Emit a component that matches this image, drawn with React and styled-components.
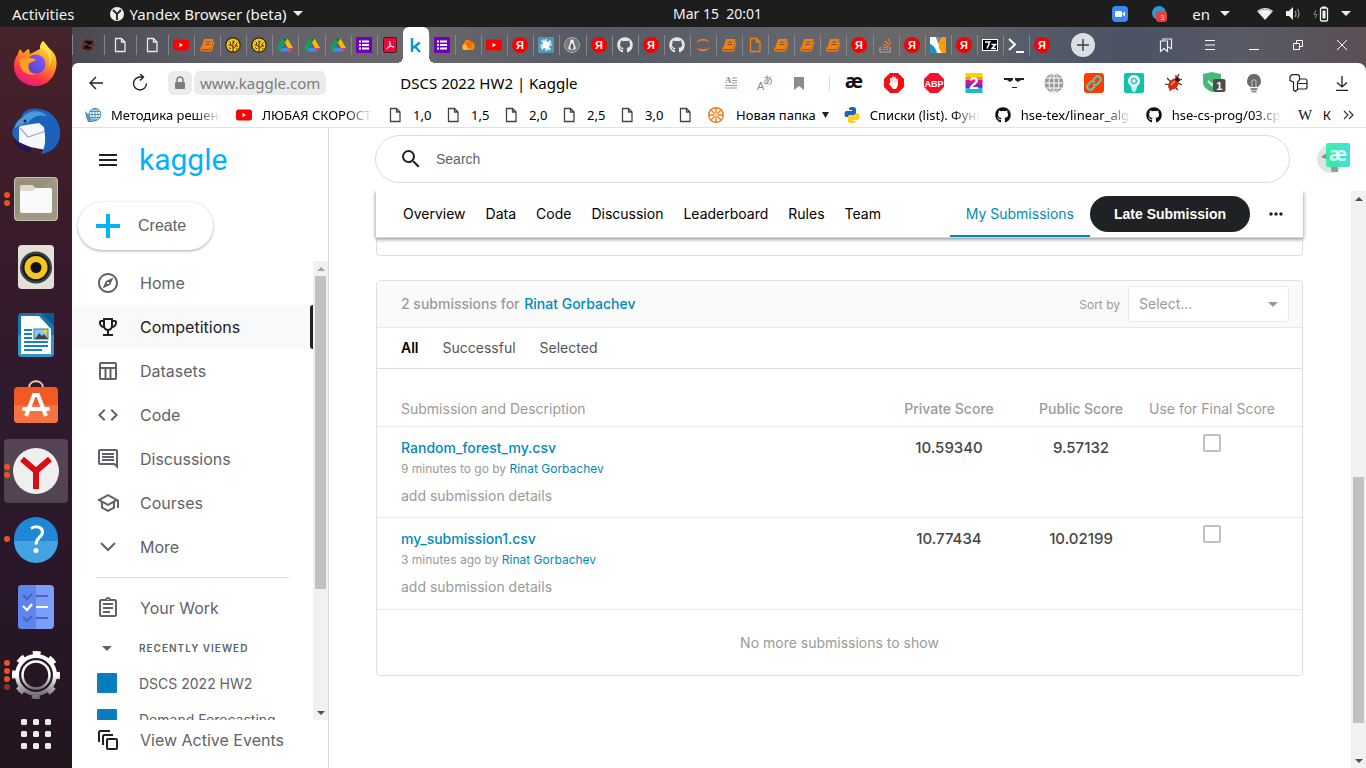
import React from "react";
import styled, { createGlobalStyle, css } from "styled-components";
import {
  MdOutlineExplore, MdOutlineEmojiEvents, MdCode, MdOutlineComment, MdOutlineSchool,
  MdOutlineAssignment, MdArrowDropDown, MdSearch, MdMoreHoriz, MdMenu,
} from "react-icons/md";
import { FaGithub } from "react-icons/fa";

const system = `"Noto Sans", "Open Sans", sans-serif`;
const inter = `Inter, "Open Sans", sans-serif`;
const arial = `"Liberation Sans", Arial, sans-serif`;

const Global = createGlobalStyle`
  *, *::before, *::after { box-sizing: border-box; }
  body { margin: 0; background: #fff; overflow: hidden; font-family: ${inter}; font-size: 14px; color: #000; }
  button { font: inherit; color: inherit; background: none; border: 0; padding: 0; cursor: pointer; }
  a { color: inherit; text-decoration: none; }
  svg { display: block; flex: none; }
`;

/* ---------- desktop shell ---------- */
const Desktop = styled.div`
  height: 100vh;
  display: flex;
  flex-direction: column;
  background: #5a5b63;
`;
const TopBar = styled.header`
  flex: 0 0 27px;
  display: grid;
  grid-template-columns: 1fr auto 1fr;
  align-items: center;
  padding: 0 15px 0 12px;
  background: #1d1d1d;
  color: #f2f2f2;
  font: 15px/20px ${system};
`;
const TopGroup = styled.div`
  display: flex;
  align-items: center;
  gap: ${(p) => p.$gap}px;
  justify-content: ${(p) => (p.$end ? "flex-end" : "flex-start")};
`;
const TopButton = styled.button`
  display: flex;
  align-items: center;
  gap: 6px;
  white-space: pre;
`;
const Clock = styled(TopButton)`
  margin-left: 72px;
  font-size: 14px;
`;
const Tray = styled(TopGroup)`
  margin-right: 15px;
`;
const Body = styled.div`
  flex: 1;
  min-height: 0;
  display: flex;
`;
const Dock = styled.nav`
  flex: 0 0 72px;
  display: flex;
  flex-direction: column;
  align-items: center;
  gap: 4px;
  padding-top: 4px;
  background: linear-gradient(#47232a 0, #3c1c2b 22%, #2f1a2e 50%, #291729 75%, #23161f 100%);
  overflow: hidden;
`;
const DockItem = styled.button`
  position: relative;
  flex: 0 0 ${(p) => p.$height || 64}px;
  width: 64px;
  display: flex;
  align-items: center;
  justify-content: center;
  border-radius: 4px;
  background: ${(p) => (p.$active ? "rgba(255,255,255,.19)" : "none")};
`;
const DockDots = styled.span`
  position: absolute;
  left: 0;
  top: 0;
  bottom: 0;
  display: flex;
  flex-direction: column;
  justify-content: center;
  gap: 2px;
  i { width: 6px; height: 6px; border-radius: 3px; background: #e95420; }
  i:nth-child(4) { opacity: .5; }
`;

/* ---------- browser window ---------- */
const Browser = styled.div`
  flex: 1;
  min-width: 0;
  display: flex;
  flex-direction: column;
  background: linear-gradient(90deg, #484951 0, #5d5d66 10%, #6b686c 26%, #565964 40%, #63656d 55%, #686868 66%, #555b69 74%, #4a5264 82%, #585a66 90%, #5c4f55 100%);
`;
const TabStrip = styled.div`
  flex: 0 0 36px;
  display: flex;
`;
const Tabs = styled.div`
  flex: 0 1 983px;
  min-width: 0;
  display: flex;
`;
const Tab = styled.button`
  position: relative;
  flex: ${(p) => (p.$pinned ? "0 0 32px" : "1 1 0")};
  min-width: 0;
  display: flex;
  align-items: center;
  justify-content: center;
  ${(p) => p.$active ? css`
    background: #fff;
    border-radius: 6px 6px 0 0;
    &::before, &::after {
      content: "";
      position: absolute;
      bottom: 0;
      width: 6px;
      height: 6px;
    }
    &::before { right: 100%; background: radial-gradient(circle at 0 0, transparent 6px, #fff 6px); }
    &::after { left: 100%; background: radial-gradient(circle at 100% 0, transparent 6px, #fff 6px); }
  ` : css`
    background: linear-gradient(#85868b, #85868b) 0 8px / 1px 20px no-repeat;
  `}
`;
const NewTab = styled.button`
  align-self: center;
  width: 24px;
  height: 24px;
  margin-left: 16px;
  display: flex;
  align-items: center;
  justify-content: center;
  border-radius: 12px;
  background: #dcdee1;
`;
const WindowControls = styled.div`
  margin-left: auto;
  padding-right: 2px;
  display: flex;
`;
const ControlButton = styled.button`
  width: 44px;
  display: flex;
  align-items: center;
  justify-content: center;
`;
const Toolbar = styled.div`
  flex: 0 0 40px;
  display: flex;
  align-items: stretch;
  padding: 0 2px;
  background: #fff;
  border-radius: 6px 8px 0 0;
`;
const Address = styled.div`
  flex: 1;
  min-width: 0;
  display: flex;
  align-items: center;
  gap: 2px;
  padding-left: 6px;
  font: 15px/24px ${system};
  white-space: nowrap;
`;
const Pill = styled.button`
  height: 24px;
  padding: 0 ${(p) => p.$pad}px;
  border-radius: 6px;
  background: #ebebeb;
  color: #7c7c7c;
  display: flex;
  align-items: center;
`;
const PageTitle = styled.span`
  margin-left: 72px;
`;
const ToolSlot = styled.button`
  width: ${(p) => p.$width}px;
  display: flex;
  align-items: center;
  justify-content: center;
`;
const ToolDivider = styled.span`
  align-self: center;
  width: 1px;
  height: 16px;
  margin: 0 4px 0 14px;
  background: #ddd;
`;
const ToolGroup = styled.div`
  display: flex;
  margin-left: 2px;
`;
const Bookmarks = styled.nav`
  flex: 0 0 25px;
  display: flex;
  align-items: center;
  padding: 0 10px 0 13px;
  background: #fff;
  border-bottom: 1px solid #e2e2e2;
  font: 13px/18px ${system};
`;
const BookmarkList = styled.div`
  flex: 1;
  min-width: 0;
  display: flex;
  align-items: center;
  gap: 15px;
  overflow: hidden;
`;
const Bookmark = styled.a`
  flex: none;
  display: flex;
  align-items: center;
  gap: ${(p) => (p.$folder ? 6 : 10)}px;
`;
const BookmarkLabel = styled.span`
  width: ${(p) => (p.$width ? p.$width + "px" : "auto")};
  padding-left: ${(p) => (p.$folder ? 6 : 0)}px;
  white-space: nowrap;
  ${(p) => p.$fade && css`
    overflow: hidden;
    mask-image: linear-gradient(90deg, #000 75%, transparent);
  `}
`;

/* ---------- page ---------- */
const Page = styled.div`
  flex: 1;
  min-height: 0;
  display: flex;
  background: #fff;
`;
const Sidebar = styled.aside`
  flex: 0 0 257px;
  display: flex;
  flex-direction: column;
  border-right: 1px solid #dadce0;
`;
const SideHead = styled.div`
  flex: none;
  height: 63px;
  display: flex;
  align-items: center;
  gap: 19px;
  padding-left: 24px;
`;
const Logo = styled.a`
  color: #00b3ff;
  font: 30px/40px Roboto, sans-serif;
`;
const CreateButton = styled.button`
  flex: none;
  align-self: flex-start;
  height: 48px;
  margin: 11px 0 11px 6px;
  padding: 0 27px 0 18px;
  display: flex;
  align-items: center;
  gap: 18px;
  border-radius: 24px;
  box-shadow: 0 1px 3px rgba(0,0,0,.35);
  color: #5f6368;
  font: 16px/20px ${arial};
`;
const SideScroll = styled.div`
  flex: 1;
  min-height: 0;
  display: flex;
`;
const SideList = styled.nav`
  flex: 1;
  overflow: hidden;
`;
const SideLink = styled.a`
  position: relative;
  height: 44px;
  display: flex;
  align-items: center;
  gap: 20px;
  padding-left: 24px;
  font-size: 16px;
  color: ${(p) => (p.$active ? "#202124" : "#5f6368")};
  background: ${(p) => (p.$active ? "#f8f9fb" : "none")};
  ${(p) => p.$active && css`
    &::after {
      content: "";
      position: absolute;
      right: 0;
      top: 0;
      bottom: 0;
      width: 3px;
      border-radius: 3px 0 0 3px;
      background: #202124;
    }
  `}
`;
const SideRule = styled.hr`
  height: 1px;
  margin: 8px 24px;
  border: 0;
  background: #dadce0;
`;
const RecentHead = styled.button`
  height: 36px;
  width: 100%;
  display: flex;
  align-items: center;
  gap: 20px;
  padding-left: 23px;
  color: #5f6368;
  font-size: 10px;
  font-weight: 600;
  letter-spacing: 1px;
`;
const RecentLink = styled.a`
  height: 36px;
  display: flex;
  align-items: center;
  gap: 22px;
  padding: 0 0 2px 25px;
  color: #5f6368;
`;
const EventsLink = styled(SideLink)`
  height: 48px;
  flex: none;
  padding-bottom: 8px;
`;
const Track = styled.div`
  flex: 0 0 15px;
  display: flex;
  flex-direction: column;
  align-items: center;
  background: #f1f1f1;
`;
const TrackArrow = styled.span`
  flex: 0 0 15px;
  display: flex;
  align-items: center;
`;
const TrackPart = styled.span`
  flex: ${(p) => p.$share} 0 0;
  width: 11px;
  background: ${(p) => (p.$thumb ? "#c1c1c1" : "none")};
`;

const Main = styled.main`
  flex: 1;
  min-width: 0;
  display: flex;
  flex-direction: column;
`;
const SearchRow = styled.div`
  flex: 0 0 63px;
  display: flex;
  align-items: center;
  gap: 27px;
  padding: 0 21px 2px 46px;
`;
const SearchBox = styled.label`
  flex: 1;
  height: 48px;
  display: flex;
  align-items: center;
  gap: 13px;
  padding: 0 23px;
  border: 1px solid #dadce0;
  border-radius: 24px;
  color: #202124;
  input {
    flex: 1;
    border: 0;
    outline: 0;
    padding: 0;
    font: 14px/20px ${arial};
  }
  input::placeholder { color: #5f6368; opacity: 1; }
`;
const Avatar = styled.button`
  position: relative;
  width: 28px;
  height: 28px;
  border-radius: 14px;
  background: #e2e2e2;
`;
const AvatarBadge = styled.span`
  position: absolute;
  left: 9px;
  top: -2px;
  width: 24px;
  height: 24px;
  border-radius: 2px;
  background: linear-gradient(90deg, rgba(52,240,160,.92), rgba(50,220,212,.92));
  color: #d9fff4;
  font: 700 20px/22px ${system};
  text-align: center;
`;
const ContentScroll = styled.div`
  flex: 1;
  min-height: 0;
  display: flex;
`;
const Content = styled.div`
  flex: 1;
  min-width: 0;
  overflow: hidden;
  padding: 0 48px 0 47px;
`;
const CompNav = styled.nav`
  position: relative;
  z-index: 1;
  height: 47px;
  display: flex;
  align-items: center;
  padding: 0 17px 0 27px;
  background: #fff;
  border-bottom: 1px solid #d5d7da;
  box-shadow: 0 1px 4px rgba(0,0,0,.5);
`;
const CompLinks = styled.div`
  flex: 1;
  display: flex;
  gap: 20px;
  padding-bottom: 2px;
`;
const MyLink = styled.a`
  align-self: stretch;
  padding: 0 16px;
  display: flex;
  align-items: center;
  color: #008abc;
  border-bottom: 2px solid #008abc;
`;
const LateButton = styled.button`
  height: 36px;
  padding: 0 24px;
  border-radius: 18px;
  background: #202124;
  color: #fff;
  font: 700 14px/20px ${arial};
`;
const MoreButton = styled.button`
  margin-left: 16px;
`;
const PrevCard = styled.section`
  height: 18px;
  border: 1px solid #dedfe0;
  border-top: 0;
  border-radius: 0 0 4px 4px;
`;
const Card = styled.section`
  margin-top: 24px;
  border: 1px solid #dedfe0;
  border-radius: 4px;
  overflow: hidden;
`;
const CardHead = styled.header`
  height: 47px;
  display: flex;
  align-items: center;
  padding: 0 13px 0 24px;
  background: #fafafa;
  border-bottom: 1px solid #e9e9e9;
`;
const CardTitle = styled.h2`
  flex: 1;
  margin: 0;
  padding-bottom: 2px;
  font-size: 14px;
  font-weight: 500;
  color: #9a9a9a;
  a { color: #008abc; margin-left: 1px; }
`;
const SortLabel = styled.label`
  margin-right: 8px;
  font-size: 12px;
  color: #9a9a9a;
`;
const SelectWrap = styled.span`
  display: grid;
  align-items: center;
  width: 161px;
  svg, select { grid-area: 1 / 1; }
  svg { justify-self: end; margin-right: 4px; pointer-events: none; z-index: 1; }
  select {
    appearance: none;
    width: 100%;
    height: 36px;
    padding: 0 10px;
    border: 1px solid #e8e8e8;
    border-radius: 4px;
    background: #fff;
    color: #9a9a9a;
    font: 14px/20px ${inter};
  }
`;
const Filters = styled.div`
  height: 41px;
  display: flex;
  align-items: center;
  gap: 24px;
  padding: 0 24px 2px;
  border-bottom: 1px solid #dedfe0;
`;
const Filter = styled.button`
  color: ${(p) => (p.$active ? "#000" : "#555")};
  font-weight: ${(p) => (p.$active ? 600 : 400)};
`;
const Table = styled.table`
  width: 100%;
  table-layout: fixed;
  border-collapse: collapse;
`;
const Th = styled.th`
  width: ${(p) => (p.$width ? p.$width + "px" : "auto")};
  height: 57px;
  padding: ${(p) => (p.$first ? "24px 0 0 24px" : p.$last ? "24px 25px 0 0" : "24px 0 0")};
  text-align: ${(p) => (p.$first ? "left" : "center")};
  font-weight: ${(p) => (p.$strong ? 500 : 400)};
  line-height: 20px;
  color: #9a9a9a;
  white-space: nowrap;
`;
const Row = styled.tr`
  height: 91px;
  border-top: 1px solid #e9e9e9;
  &:last-child { height: 92px; border-bottom: 1px solid #e9e9e9; }
`;
const FileCell = styled.td`
  padding: 11px 0 0 24px;
  vertical-align: top;
`;
const FileLink = styled.a`
  display: block;
  line-height: 20px;
  font-weight: 500;
  color: #008abc;
`;
const Meta = styled.div`
  margin-top: 1px;
  font-size: 12px;
  line-height: 20px;
  color: #9a9a9a;
  a { color: #008abc; }
`;
const Details = styled.button`
  display: block;
  margin-top: 7px;
  line-height: 20px;
  color: #9a9a9a;
`;
const Score = styled.td`
  padding: 11px 0 0;
  vertical-align: top;
  text-align: center;
  line-height: 20px;
  font-weight: 500;
  font-size: 15px;
  color: #454545;
`;
const PickCell = styled.td`
  padding: 7px 25px 0 0;
  vertical-align: top;
  text-align: center;
  input {
    appearance: none;
    display: block;
    width: 18px;
    height: 18px;
    margin: 0 auto;
    border: 2px solid #bdc1c6;
    border-radius: 2px;
    background: #fff;
  }
`;
const NoMore = styled.p`
  margin: 0;
  height: 65px;
  display: flex;
  align-items: center;
  justify-content: center;
  color: #9a9a9a;
`;

/* ---------- small drawings ---------- */
const Svg = ({ s = 16, vb = "0 0 16 16", children, ...rest }) => (
  <svg width={s} height={s} viewBox={vb} fill="none" aria-hidden="true" {...rest}>{children}</svg>
);
const Caret = ({ up, color = "#505050", w = 8, h = 4 }) => (
  <svg width={w} height={h} viewBox="0 0 8 4" preserveAspectRatio="none" aria-hidden="true">
    <path d={up ? "M0 4L4 0l4 4z" : "M0 0l4 4 4-4z"} fill={color} />
  </svg>
);
const Doc = ({ color = "#e8e8e8" }) => (
  <Svg><path d="M3.500 1.500h6L13 5v9.500H3.500zM9.500 1.500V5H13" stroke={color} strokeWidth="1.300" /></Svg>
);
const Yt = () => (
  <Svg><rect y="2.500" width="16" height="11" rx="2.500" fill="#f00" /><path d="M6.500 5.800v4.400L10 8z" fill="#fff" /></Svg>
);
const Book = () => (
  <Svg>
    <path d="M5.200 2h8.300q1 0 .8 1l-2.300 8q-.3 1-1.300 1H3.500q-1.500 0-1.200-1.200z" fill="#f77f0e" />
    <path d="M2 10.500Q1.200 13.800 3.500 13.800h7.800q1 0 1.300-1L15 5" stroke="#f77f0e" strokeWidth="1.300" />
    <path d="M6.800 5h5M6.100 7.500h5" stroke="#6a5748" strokeWidth="1" />
  </Svg>
);
const Brain = () => (
  <Svg>
    <circle cx="8" cy="8" r="7.200" fill="#f9c61e" stroke="#2b2412" strokeWidth="1.200" />
    <path d="M8 15V3.500M8 11.500l3-2.500V7M8 9.500L5.500 8V5.500M8 6l1.800-1.800M5.500 8H3.500M11 9h2M6 12l-2-1.500M11 12.500L12.500 11M5.500 5.500L4.500 4.500M11 7l1.500-1.500" stroke="#2b2412" strokeWidth=".9" />
  </Svg>
);
const Drive = () => (
  <Svg>
    <path d="M5.500 1.500L0 11l2.500 3.500L8.200 5z" fill="#11a15e" />
    <path d="M5.500 1.500h5L8.200 5z" fill="#0b8043" />
    <path d="M10.500 1.500L16 11h-5L8 5.500z" fill="#ffba00" />
    <path d="M5 11h11l-2.500 3.500h-11z" fill="#4688f4" />
    <path d="M16 11l-2.500 3.500L11 11z" fill="#e94335" />
  </Svg>
);
const Forms = () => (
  <Svg><rect width="16" height="16" rx="1" fill="#7200b8" /><path d="M3 4.500h2M6 4.500h7M3 8h2M6 8h7M3 11.500h2M6 11.500h7" stroke="#fff" strokeWidth="2" /></Svg>
);
const Pdf = () => (
  <Svg><rect x="1.500" y=".5" width="13" height="15" rx="2" fill="#ea0b3e" stroke="#52101f" /><path d="M7.500 4c1.500 3-.5 6-3 8 2-2.500 5-3.200 7.500-1.800C9.500 10 7.500 7 7.500 4z" stroke="#fff" strokeWidth=".8" /></Svg>
);
const Cloud = () => (
  <Svg><path d="M4 13a3.500 3.500 0 010-6 4 4 0 017.500-2 4.200 4.200 0 01.5 8z" fill="#ff8a00" /><circle cx="9" cy="7.500" r="3.500" fill="#ff6d00" /><path d="M4 13a3.500 3.500 0 010-6c3 0 3 4 5 6z" fill="#ffb640" /></Svg>
);
const Ya = () => (
  <Svg><circle cx="8" cy="8" r="8" fill="#f60000" /><text x="8" y="12" textAnchor="middle" fontFamily={arial} fontWeight="700" fontSize="11" fill="#fff">Я</text></Svg>
);
const Splat = () => (
  <Svg><rect width="16" height="16" fill="#5096b8" /><circle cx="8" cy="8" r="3.500" fill="#fff" /><path d="M8 2v12M2 8h12M3.500 3.500l9 9M12.500 3.500l-9 9M5.500 2.500l5 11M2.500 10.500l11-5" stroke="#fff" strokeWidth="1.200" /></Svg>
);
const Penguin = () => (
  <Svg><circle cx="8" cy="8" r="7.500" fill="#777" stroke="#a9a9a9" /><path d="M8 2.500c2 0 2 2 2 4 1 2 2 3 1.500 6h-7C4 9.500 5 8.500 6 6.500c0-2 0-4 2-4z" fill="#ececec" /><path d="M8 6c1.500 2 2 4 1 6H7c-1-2-.5-4 1-6z" fill="#555" /></Svg>
);
const Jupyter = () => (
  <Svg><path d="M1.500 5.500c2.500-5 10.500-5 13 0-4-2.200-9-2.200-13 0zM1.500 10.500c2.500 5 10.500 5 13 0-4 2.200-9 2.200-13 0z" fill="#f37626" /></Svg>
);
const Wave = () => (
  <Svg><path d="M0 0h16v16H0z" fill="#fff" /><path d="M0 7c3 1 6 4 7 9H0z" fill="#1694c9" /><path d="M6 0c1 5 3 7 4 9 0-4 1-7 3-9z" fill="#7d8793" /><path d="M16 0v16h-4C7 11 8 3 13 0z" fill="#ff9b0a" /></Svg>
);
const SevenZip = () => (
  <Svg><rect y="2" width="16" height="12" fill="#fff" /><rect x="1" y="3" width="14" height="10" fill="#000" /><path d="M3 5h4v2L5 11.500M8 4v1M9.500 7.500h4l-3.500 4h4" stroke="#fff" strokeWidth="1.500" /></Svg>
);
const Prompt = () => (
  <Svg><path d="M1 2l6 5.500L1 13M8 15h8" stroke="#fff" strokeWidth="2" /></Svg>
);
const Zed = () => (
  <Svg><circle cx="8" cy="8" r="6.300" fill="#3a3438" stroke="#9d2c2e" /><path d="M5 5.200h6l-6 5.600h6" stroke="#0d0d0d" strokeWidth="2" /><path d="M2 5.500l12 5" stroke="#c33" strokeWidth=".7" /></Svg>
);
const Kay = () => (
  <Svg s={18} vb="0 0 18 18"><path d="M5 2v14M12.800 6.500L6 12M8 10.500l5 5.500" stroke="#0f96cc" strokeWidth="2.400" /></Svg>
);
const GH = ({ color = "#e6e6e6" }) => <FaGithub size={16} color={color} />;
const SO = () => <Svg><path d="M2 10v5h10v-5" stroke="#aaa" strokeWidth="1.200" /><path d="M4 12.500h6M4.200 10l5.900 1M5 7l5.500 2.700M7 4l4.500 4M10 1.500l3 5" stroke="#f48024" strokeWidth="1.200" /></Svg>;

const tabs = [
  Zed, Doc, Doc, Yt, Book, Brain, Brain, Drive, Drive, Drive, Forms, Pdf, Kay, Forms, Cloud, Yt, Ya,
  Splat, Penguin, Ya, GH, Ya, GH, Jupyter, Book, () => <Doc color="#f77f0e" />, Book, Book, Book, Ya, SO,
  Ya, Wave, Ya, SevenZip, Prompt, Ya,
];

const Globe = ({ s = 20, color = "#9a9a9a" }) => (
  <Svg s={s} vb="0 0 20 20"><circle cx="10" cy="10" r="9.500" fill={color} /><path d="M10 1v18M1 10h18M2.500 5h15M2.500 15h15" stroke="#fff" /><ellipse cx="10" cy="10" rx="5" ry="9.200" stroke="#fff" /></Svg>
);
const extensions = [
  ["Reader", () => <Svg s={20} vb="0 0 20 20"><text x="10" y="15" textAnchor="middle" fontFamily={system} fontWeight="700" fontSize="20" fill="#111">æ</text></Svg>],
  ["AdBlock", () => <Svg s={20} vb="0 0 20 20"><path d="M6 0h8l6 6v8l-6 6H6l-6-6V6z" fill="#f40d12" /><path d="M7 11V5.500M9 10V4M11 10V4.500M13 11V6" stroke="#fff" strokeWidth="1.700" strokeLinecap="round" /><path d="M6.200 9.500h7.700v3L12 16H9l-4-5z" fill="#fff" /></Svg>],
  ["Adblock Plus", () => <Svg s={20} vb="0 0 20 20"><path d="M6 0h8l6 6v8l-6 6H6l-6-6V6z" fill="#f7102c" /><text x="10" y="13.500" textAnchor="middle" fontFamily={arial} fontWeight="700" fontSize="9" fill="#fff">ABP</text></Svg>],
  ["Speed Dial 2", () => <Svg s={20} vb="0 0 20 20"><path d="M1.500 0h17v4h-17z" fill="#ffd000" /><path d="M1.500 4h17v3h-17z" fill="#f7941d" /><path d="M1.500 7h17v4h-17z" fill="#e5127d" /><path d="M1.500 11h17v4h-17z" fill="#7a28c8" /><path d="M1.500 15h17v5h-17z" fill="#20b9c7" /><text x="10" y="16" textAnchor="middle" fontFamily={arial} fontWeight="700" fontSize="17" fill="#fff">2</text></Svg>],
  ["Mask", () => <Svg s={20} vb="0 0 20 20"><path d="M0 5h9v2l-3 2-3-2H0zM20 5h-9v2l3 2 3-2h3zM8 14h5v1H8z" fill="#222" /></Svg>],
  ["Globe", Globe],
  ["Link", () => <Svg s={20} vb="0 0 20 20"><rect width="20" height="20" rx="3" fill="#ff3d00" /><path d="M9 7l2.500-2.800a3 3 0 014.400 4.200L13.500 11a3 3 0 01-4.300-.2M11 13l-2.500 2.800A3 3 0 014.100 11.600L6.500 9a3 3 0 014.300.2" stroke="#3ad6c6" strokeWidth="2" /></Svg>],
  ["Idea", () => <Svg s={20} vb="0 0 20 20"><rect width="20" height="20" rx="2" fill="#0cc5ab" /><circle cx="10" cy="8" r="6" fill="#fff" /><path d="M7 14h6M7.500 16h5M8.500 18h3" stroke="#fff" strokeWidth="1.500" /><circle cx="10" cy="8" r="2.500" stroke="#0cc5ab" strokeWidth="2" strokeDasharray="1.500 .5" /></Svg>],
  ["Bug", () => <Svg s={20} vb="0 0 20 20"><path d="M3 5l4 4M1 11l5 1M6 18l1-4M12 2l0 4M18 6l-4 2M18 12l-4-2M14 17l-3-3M15 1l-2 4" stroke="#333" strokeWidth="1.200" /><ellipse cx="9.500" cy="11" rx="4.500" ry="6.500" transform="rotate(40 9.500 11)" fill="#d92d13" /><path d="M7 12l4-4" stroke="#ff9a70" strokeWidth="1.500" /><circle cx="13.500" cy="6.500" r="2.300" fill="#3a1712" /></Svg>],
  ["Protect", () => <Svg s={24} vb="0 0 24 24"><path d="M1 3l9-2 9 2v8c0 5-4 8-9 10-5-2-9-5-9-10z" fill="#45b87a" /><path d="M6 10l4 4 4-5" stroke="#d7f3e3" strokeWidth="2" /><rect x="11" y="8" width="12.500" height="13" rx="2" fill="#4c4c4c" /><text x="17.300" y="18.500" textAnchor="middle" fontFamily={arial} fontWeight="700" fontSize="11" fill="#fff">1</text></Svg>],
  ["Lamp", () => <Svg s={20} vb="0 0 20 20"><path d="M10 1a7 7 0 00-3.500 13h7A7 7 0 0010 1z" fill="#6b6b6b" /><path d="M8 14V8q2-2.500 4 0v6" stroke="#bbb" strokeWidth="1.200" /><path d="M6.500 16h7M7.500 18.500h5" stroke="#8a8a8a" strokeWidth="2" /></Svg>],
];

const bookmarks = [
  [<Svg><circle cx="10" cy="7.500" r="6" fill="#fff" stroke="#2f7fb5" /><path d="M10 1.500v12M4 7.500h12M5 4.500h10M5 10.500h10" stroke="#2f7fb5" strokeWidth=".8" /><ellipse cx="10" cy="7.500" rx="3" ry="6" stroke="#2f7fb5" strokeWidth=".8" /><path d="M0 4l4 4 2 5 4 2H3L1 10z" fill="#5893b8" /></Svg>, "Методика решения", 110],
  [<Yt />, "ЛЮБАЯ СКОРОСТЬ", 110],
  [<Doc color="#444" />, "1,0", 17],
  [<Doc color="#444" />, "1,5", 17],
  [<Doc color="#444" />, "2,0", 17],
  [<Doc color="#444" />, "2,5", 17],
  [<Doc color="#444" />, "3,0", 17],
  [<Doc color="#444" />, null],
  [<Svg><circle cx="8" cy="8" r="7.300" stroke="#f07c12" strokeWidth="1.400" /><path d="M8 1v14M1 8h14M3 3l10 10M13 3L3 13" stroke="#f07c12" strokeWidth="1.400" /><circle cx="8" cy="8" r="2" fill="#fbd2a4" /></Svg>, "Новая папка", 0, true],
  [<Svg><path d="M8 0c4 0 4 1 4 3v3c0 1-1 2-2 2H6c-1 0-2 1-2 2H2C0 10 0 5 2 4h6V3H5C5 1 5 0 8 0z" fill="#2163b8" /><path d="M8 16c-4 0-4-1-4-3v-3c0-1 1-2 2-2h4c1 0 2-1 2-2h2c2 1 2 6 0 7H9v1h3c0 1-1 2-4 2z" fill="#ffd21f" /></Svg>, "Списки (list). Функции", 110],
  [<GH color="#111" />, "hse-tex/linear_algebra", 110],
  [<GH color="#111" />, "hse-cs-prog/03.cpp", 110],
  [<Svg><text x="8" y="13" textAnchor="middle" fontFamily="Liberation Serif, serif" fontSize="15" fill="#111">W</text></Svg>, "К", 5],
];

const SelectAll = () => (
  <Svg s={24} vb="0 0 24 24"><path d="M3 14V4.500Q3 3 4.500 3H14M7 17V8.500Q7 7 8.500 7H17" stroke="#202124" strokeWidth="2" /><rect x="11" y="11" width="10" height="10" rx="1" stroke="#202124" strokeWidth="2" /></Svg>
);
const TableIcon = () => (
  <Svg s={24} vb="0 0 24 24"><rect x="4" y="4" width="16" height="16" rx="1" stroke="currentColor" strokeWidth="2" /><path d="M4 9h16M9.500 9v11M14.500 9v11" stroke="currentColor" strokeWidth="2" /></Svg>
);
const Chevron = () => (
  <Svg s={24} vb="0 0 24 24"><path d="M5 8l7 7 7-7" stroke="currentColor" strokeWidth="2" /></Svg>
);
const navItems = [
  ["Home", () => <MdOutlineExplore size={24} />],
  ["Competitions", () => <MdOutlineEmojiEvents size={24} />],
  ["Datasets", TableIcon],
  ["Code", () => <MdCode size={24} />],
  ["Discussions", () => <MdOutlineComment size={24} />],
  ["Courses", () => <MdOutlineSchool size={24} />],
  ["More", Chevron],
];
const RecentTile = () => (
  <Svg s={20} vb="0 0 20 20"><rect width="20" height="20" rx="1" fill="#0a80c2" /><path d="M4 4h3v3H4zM9 4h3v3H9zM14 4h3v3h-3zM4 9h3v3H4zM9 9h3v3H9zM14 9h3v3h-3zM4 14h3v3H4zM9 14h3v3H9zM14 14h3v3h-3z" stroke="#0774b4" /></Svg>
);

const dock = [
  ["Firefox", 0, () => (
    <Svg s={48} vb="0 0 48 48">
      <defs>
        <linearGradient id="ff" x1=".8" y1="0" x2=".3" y2="1"><stop offset="0" stopColor="#fff04a" /><stop offset=".4" stopColor="#ff9a1e" /><stop offset=".75" stopColor="#ff3647" /><stop offset="1" stopColor="#e31587" /></linearGradient>
        <linearGradient id="ffp" x1="1" y1="0" x2="0" y2="1"><stop offset="0" stopColor="#9059ff" /><stop offset="1" stopColor="#4a3fd0" /></linearGradient>
      </defs>
      <path d="M28 10c0-3 1-6 3-8 2 5 9 8 12 14 5 11-2 31-19 31C11 47 2 38 2 27c0-6 2-9 4-12 0-2 1-4 3-5 0 2 1 3 3 4 1-2 4-4 5-4l1 5 10-5z" fill="url(#ff)" />
      <circle cx="24" cy="25" r="9.500" fill="url(#ffp)" />
      <path d="M8 20c5-3 11-1 16 0 0 3-6 3-7 5-2 6 2 10 7 10-10 3-18-5-16-15z" fill="#ff9b28" />
      <path d="M28 9c8 2 12 12 8 20 7-9 2-21-5-27-2 2-3 4-3 7z" fill="#ffe24a" />
    </Svg>)],
  ["Thunderbird", 0, () => (
    <Svg s={48} vb="0 0 48 48">
      <path d="M20 2C35 0 48 11 48 26c0 12-8 19-19 21l4-6-12-2C10 38 2 34 0 26c1-6 5-12 9-15 2-6 6-9 11-9z" fill="#1f66c4" />
      <path d="M7 19l20-3 10 8-3 19-16-3-11-5z" fill="#f4f7fb" /><path d="M8 21l8 9 18-6" stroke="#a9a9a9" strokeWidth="1.200" />
      <path d="M20 2C35 0 48 11 48 26c0 12-8 19-19 21 6-8 4-19 3-27-4-6-12-8-20-3-3 1-6 4-10 8C3 18 6 13 10 11c1-5 5-9 10-9z" fill="#1c62bd" />
      <path d="M10 11c6-8 18-9 25-2-9-2-15 1-19 7-5 0-8 2-13 5 0-4 3-8 7-10z" fill="#4a9ad8" /><circle cx="13" cy="14" r="1.500" fill="#222" />
      <path d="M1 30c4 8 10 9 18 10l-1 5C9 45 3 39 1 30z" fill="#26135c" />
    </Svg>)],
  ["Files", 2, () => (
    <Svg s={48} vb="0 0 48 48"><rect x="2" y="2" width="44" height="44" rx="4" fill="#9f9983" /><path d="M2 6q0-4 4-4h36L2 42z" fill="#8a846e" opacity=".4" /><rect x="2.500" y="2.500" width="43" height="43" rx="4" stroke="#c7c3b4" /><path d="M8 12q0-2 2-2h10l4 3h6v8H8z" fill="#ddd9ce" /><path d="M8 17q0-1 2-1h10l4-3h14q2 0 2 2v21q0 2-2 2H10q-2 0-2-2z" fill="#fafafa" /></Svg>)],
  ["Rhythmbox", 0, () => (
    <Svg s={48} vb="0 0 48 48"><rect x="6" y="2" width="36" height="44" rx="4" fill="#e4e0d6" /><circle cx="24" cy="24.500" r="16" fill="#3a4049" /><circle cx="24" cy="24.500" r="13.500" fill="#15171b" /><circle cx="24" cy="24.500" r="11.500" fill="#f2c61c" /><circle cx="24" cy="24.500" r="5.500" fill="#111" /></Svg>)],
  ["LibreOffice Writer", 0, () => (
    <Svg s={48} vb="0 0 48 48"><path d="M6 6q0-4 4-4h32v40q0 4-4 4H10q-4 0-4-4z" fill="#1578aa" /><path d="M6 24h36v18q0 4-4 4H10q-4 0-4-4z" fill="#3394c8" /><path d="M9 5h18l12 13v25H9z" fill="#fff" /><path d="M29 2h13v13z" fill="#0b5c8e" /><path d="M12 19h8M12 23h8M12 27h8M12 31h24M12 35h24M12 39h18" stroke="#1483ba" strokeWidth="2" /><rect x="22" y="18" width="14" height="10" fill="#8cc8ee" stroke="#1483ba" /><path d="M23 28l4-6 3 3 2-2 4 5z" fill="#444" /><circle cx="33.500" cy="20.500" r="2" fill="#ffd02b" /></Svg>)],
  ["Ubuntu Software", 0, () => (
    <Svg s={48} vb="0 0 48 48"><path d="M17 9c0-9 14-9 14 0" stroke="#f7c9a4" strokeWidth="2" /><rect x="2" y="8" width="44" height="36" rx="4" fill="#f15a24" /><path d="M2 26h44v14q0 4-4 4H6q-4 0-4-4z" fill="#f4733f" /><path d="M14 37L22 16h4l8 21" stroke="#fff" strokeWidth="4" /><path d="M12 30h24" stroke="#fff" strokeWidth="4" strokeLinecap="round" /></Svg>)],
  ["Yandex Browser", 2, () => (
    <Svg s={48} vb="0 0 48 48"><circle cx="24" cy="24" r="23" fill="#efefef" /><path d="M10 12l14 12 14-12M24 23v19" stroke="#d90e10" strokeWidth="6" /></Svg>)],
  ["Help", 1, () => (
    <Svg s={48} vb="0 0 48 48"><circle cx="24" cy="24" r="22" fill="#1f87d6" /><path d="M2 26a22 22 0 0044 0z" fill="#43a3e2" /><path d="M19 13.500c6-3.500 12-1 11.500 4-.5 5-7 5.500-6.500 12" stroke="#fff" strokeWidth="3" /><circle cx="24" cy="35.500" r="2.500" fill="#fff" /></Svg>)],
  ["To Do", 0, () => (
    <Svg s={48} vb="0 0 48 48"><rect x="6" y="2" width="36" height="44" rx="4" fill="#7c9df8" /><path d="M6 6q0-4 4-4h14v44H10q-4 0-4-4z" fill="#5f85ee" /><path d="M11 12l4 4 5-5M11 34l4 4 5-5M24 13h12M24 35h12" stroke="#4566bd" strokeWidth="2" /><path d="M11 23l4 4 5-6M24 24h12" stroke="#fff" strokeWidth="2.200" /></Svg>)],
  ["Settings", 4, () => (
    <Svg s={48} vb="0 0 48 48"><defs><linearGradient id="gear" x1="0" y1="0" x2="0" y2="1"><stop offset=".5" stopColor="#fff" /><stop offset="1" stopColor="#77717a" /></linearGradient></defs><circle cx="24" cy="24" r="22" stroke="url(#gear)" strokeWidth="4" strokeDasharray="8 9.280" strokeDashoffset="4" /><circle cx="24" cy="24" r="19" stroke="url(#gear)" strokeWidth="4" /><circle cx="24" cy="24" r="13.500" stroke="url(#gear)" strokeWidth="2.500" /></Svg>)],
];

const submissions = [
  ["Random_forest_my.csv", "9 minutes to go by ", "10.59340", "9.57132"],
  ["my_submission1.csv", "3 minutes ago by ", "10.77434", "10.02199"],
];

const Scrollbar = ({ parts, dim }) => (
  <Track aria-hidden="true">
    <TrackArrow><Caret up color={dim ? "#a3a3a3" : "#505050"} /></TrackArrow>
    {parts.map(([share, thumb], i) => <TrackPart key={i} $share={share} $thumb={thumb} />)}
    <TrackArrow><Caret /></TrackArrow>
  </Track>
);

export default function App() {
  return (
    <Desktop>
      <Global />
      <TopBar>
        <TopGroup $gap={35}>
          <TopButton>Activities</TopButton>
          <TopButton>
            <Svg s={14} vb="0 0 14 14"><circle cx="7" cy="7" r="7" fill="#eee" /><path d="M3 3l4 4 4-4M7 7v6" stroke="#222" strokeWidth="1.800" /></Svg>
            Yandex Browser (beta)
            <Caret color="#eee" w={10} h={5} />
          </TopButton>
        </TopGroup>
        <Clock>{"Mar 15  20:01"}</Clock>
        <TopGroup $gap={12} $end>
          <Tray $gap={24}>
            <Svg><rect width="16" height="16" rx="4" fill="#3c86f8" /><rect x="3" y="5" width="7" height="6" rx="1" fill="#fff" /><path d="M10.500 7.500L13 5.500v5l-2.500-2z" fill="#fff" /></Svg>
            <Svg><circle cx="7" cy="7" r="7" fill="#2a9bd4" /><rect x="4" y="5" width="11" height="11" rx="3" fill="#ee3d36" /><text x="10.500" y="13.500" textAnchor="middle" fontFamily={arial} fontSize="7" fill="#fff">3</text></Svg>
            <TopButton>en <Caret color="#eee" w={10} h={5} /></TopButton>
          </Tray>
          <Svg><path d="M0 5q8-6 16 0L8 14z" fill="#f2f2f2" /><path d="M1 5.500q7-4.500 14 0" stroke="#aaa" /></Svg>
          <Svg><path d="M1 5h3l4-4v13L4 10H1z" fill="#f2f2f2" /><path d="M10 5q2 3 0 6M12.500 3q3 5 0 9" stroke="#999" strokeWidth="1.200" /></Svg>
          <Svg><path d="M3 4L1 8.500h3L2 12" stroke="#888" /><rect x="7.500" y="2" width="7" height="13" rx="1" stroke="#f2f2f2" strokeWidth="1.300" /><path d="M9.500 4.500h3v8h-3zM9 .5h4v1.500H9z" fill="#f2f2f2" /></Svg>
          <Caret color="#eee" w={10} h={5} />
        </TopGroup>
      </TopBar>
      <Body>
        <Dock aria-label="Dock">
          {dock.map(([name, dots, Icon]) => (
            <DockItem key={name} aria-label={name} $active={name === "Yandex Browser"}>
              <DockDots>{Array.from({ length: dots }, (_, i) => <i key={i} />)}</DockDots>
              <Icon />
            </DockItem>
          ))}
          <DockItem aria-label="Show applications" $height={46}>
            <Svg s={30} vb="0 0 30 30">
              {[0, 12, 24].map((y) => [0, 12, 24].map((x) => <rect key={x + "-" + y} x={x} y={y} width="6" height="6" rx="1.500" fill="#eeece8" />))}
            </Svg>
          </DockItem>
        </Dock>
        <Browser>
          <TabStrip>
            <Tabs>
              {tabs.map((Icon, i) => <Tab key={i} aria-label={`Tab ${i + 1}`} $pinned={i < 3} $active={i === 12}><Icon /></Tab>)}
            </Tabs>
            <NewTab aria-label="New tab"><Svg><path d="M8 2v12M2 8h12" stroke="#333c4d" strokeWidth="1.400" /></Svg></NewTab>
            <WindowControls>
              <ControlButton aria-label="Collections"><Svg><path d="M2.500 4h7v10.500L6 11.500l-3.500 3zM5 4V2h8.500v9.500L10 10" stroke="#eee" strokeWidth="1.200" /></Svg></ControlButton>
              <ControlButton aria-label="Menu"><Svg><path d="M3 3.500h10M3 8h10M3 12.500h10" stroke="#fff" /></Svg></ControlButton>
              <ControlButton aria-label="Minimise"><Svg><path d="M3 12.500h10" stroke="#fff" /></Svg></ControlButton>
              <ControlButton aria-label="Restore"><Svg><path d="M3.500 6.500h6v6h-6zM6.500 6.500v-3h6v6h-3" stroke="#fff" /></Svg></ControlButton>
              <ControlButton aria-label="Close"><Svg><path d="M3 3l10 10M13 3L3 13" stroke="#fff" /></Svg></ControlButton>
            </WindowControls>
          </TabStrip>
          <Toolbar>
            <ToolSlot $width={44} aria-label="Back"><Svg><path d="M15 8H2M8 2L2 8l6 6" stroke="#222" strokeWidth="1.400" /></Svg></ToolSlot>
            <ToolSlot $width={44} aria-label="Reload"><Svg s={18} vb="0 0 18 18"><path d="M15.500 9.500A6.500 6.500 0 119 3h3M9 0l3.500 3L9 6.500" stroke="#222" strokeWidth="1.400" /></Svg></ToolSlot>
            <Address>
              <Pill $pad={4} aria-label="Connection is secure"><Svg><rect x="3" y="7" width="10" height="7" rx="1" fill="#7d7d7d" /><path d="M5 8V5a3 3 0 016 0v3" stroke="#7d7d7d" strokeWidth="1.500" /></Svg></Pill>
              <Pill $pad={6}>www.kaggle.com</Pill>
              <PageTitle>DSCS 2022 HW2 | Kaggle</PageTitle>
            </Address>
            <ToolSlot $width={34} aria-label="Reader mode"><Svg><text x="2" y="8" fontFamily="Liberation Serif, serif" fontWeight="700" fontSize="9" fill="#888">A</text><path d="M9 3h5M9 5.500h5M9 8h5M2 10.500h12M2 13h12" stroke="#999" /></Svg></ToolSlot>
            <ToolSlot $width={34} aria-label="Translate"><Svg><text x="0" y="15" fontFamily={arial} fontSize="11" fill="#888">A</text><text x="6" y="9" fontFamily="Noto Sans CJK JP" fontSize="10" fill="#888">あ</text></Svg></ToolSlot>
            <ToolSlot $width={33} aria-label="Bookmark"><Svg><path d="M3 2h10v13l-5-4-5 4z" fill="#8c8c8c" /></Svg></ToolSlot>
            <ToolDivider />
            {extensions.map(([name, Icon]) => <ToolSlot key={name} $width={40} aria-label={name}><Icon /></ToolSlot>)}
            <ToolGroup>
              <ToolSlot $width={44} aria-label="Passwords"><Svg s={20} vb="0 0 20 20"><path d="M4 1.700h6L11.500 3v4L9.500 9v7.500L7.500 18.500l-2-1.500V9L2 7.500V3.500zM11.500 6h5.500q2 0 2 2v6q0 2-2 2H9.500M10 10.500h9" stroke="#222" strokeWidth="1.200" /></Svg></ToolSlot>
              <ToolSlot $width={44} aria-label="Downloads"><Svg><path d="M8 1v11M3 7.500L8 12l5-4.500M2 15.300h12" stroke="#222" strokeWidth="1.300" /></Svg></ToolSlot>
            </ToolGroup>
          </Toolbar>
          <Bookmarks aria-label="Bookmarks">
            <BookmarkList>
              {bookmarks.map(([icon, label, width, folder], i) => (
                <Bookmark key={i} href="#" aria-label={label || "Bookmark"} $folder={folder}>
                  {icon}
                  {label && <BookmarkLabel $width={width} $folder={folder} $fade={width > 90}>{label}</BookmarkLabel>}
                  {folder && <Caret color="#222" w={7} h={6} />}
                </Bookmark>
              ))}
            </BookmarkList>
            <Svg><path d="M4 4l4 4-4 4M9 4l4 4-4 4" stroke="#333" strokeWidth="1.200" /></Svg>
          </Bookmarks>
          <Page>
            <Sidebar>
              <SideHead>
                <button aria-label="Menu"><MdMenu size={24} color="#202124" /></button>
                <Logo href="#">kaggle</Logo>
              </SideHead>
              <CreateButton>
                <Svg s={24} vb="0 0 24 24"><path d="M12 0v24M0 12h24" stroke="#00b3ff" strokeWidth="4" /></Svg>
                Create
              </CreateButton>
              <SideScroll>
                <SideList>
                  {navItems.map(([label, Icon]) => (
                    <SideLink key={label} href="#" $active={label === "Competitions"}><Icon />{label}</SideLink>
                  ))}
                  <SideRule />
                  <SideLink href="#"><MdOutlineAssignment size={24} />Your Work</SideLink>
                  <RecentHead><MdArrowDropDown size={24} />RECENTLY VIEWED</RecentHead>
                  <RecentLink href="#"><RecentTile />DSCS 2022 HW2</RecentLink>
                  <RecentLink href="#"><RecentTile />Demand Forecasting</RecentLink>
                </SideList>
                <Scrollbar dim parts={[[313, true], [116, false]]} />
              </SideScroll>
              <EventsLink href="#"><SelectAll />View Active Events</EventsLink>
            </Sidebar>
            <Main>
              <SearchRow>
                <SearchBox>
                  <MdSearch size={24} />
                  <input type="text" placeholder="Search" aria-label="Search" />
                </SearchBox>
                <Avatar aria-label="Account">
                  <Svg s={28} vb="0 0 28 28"><path d="M4 12l6-4 6 3v6l4 10h-5l-3-12z" fill="#8a8a8a" /><path d="M13 19h8v8h-6z" fill="#999" /></Svg>
                  <AvatarBadge>æ</AvatarBadge>
                </Avatar>
              </SearchRow>
              <ContentScroll>
                <Content>
                  <CompNav>
                    <CompLinks>
                      {["Overview", "Data", "Code", "Discussion", "Leaderboard", "Rules", "Team"].map((t) => <a key={t} href="#">{t}</a>)}
                    </CompLinks>
                    <MyLink href="#">My Submissions</MyLink>
                    <LateButton>Late Submission</LateButton>
                    <MoreButton aria-label="More"><MdMoreHoriz size={20} color="#202124" /></MoreButton>
                  </CompNav>
                  <PrevCard />
                  <Card>
                    <CardHead>
                      <CardTitle>2 submissions for <a href="#">Rinat Gorbachev</a></CardTitle>
                      <SortLabel htmlFor="sort">Sort by</SortLabel>
                      <SelectWrap>
                        <select id="sort"><option>Select...</option></select>
                        <MdArrowDropDown size={24} color="#999" />
                      </SelectWrap>
                    </CardHead>
                    <Filters>
                      <Filter $active>All</Filter>
                      <Filter>Successful</Filter>
                      <Filter>Selected</Filter>
                    </Filters>
                    <Table>
                      <thead>
                        <tr>
                          <Th $first>Submission and Description</Th>
                          <Th $width={132} $strong>Private Score</Th>
                          <Th $width={132} $strong>Public Score</Th>
                          <Th $width={155} $last>Use for Final Score</Th>
                        </tr>
                      </thead>
                      <tbody>
                        {submissions.map(([file, when, priv, pub]) => (
                          <Row key={file}>
                            <FileCell>
                              <FileLink href="#">{file}</FileLink>
                              <Meta>{when}<a href="#">Rinat Gorbachev</a></Meta>
                              <Details>add submission details</Details>
                            </FileCell>
                            <Score>{priv}</Score>
                            <Score>{pub}</Score>
                            <PickCell><input type="checkbox" aria-label={`Use ${file} for final score`} /></PickCell>
                          </Row>
                        ))}
                      </tbody>
                    </Table>
                    <NoMore>No more submissions to show</NoMore>
                  </Card>
                </Content>
                <Scrollbar parts={[[271, false], [246, true], [30, false]]} />
              </ContentScroll>
            </Main>
          </Page>
        </Browser>
      </Body>
    </Desktop>
  );
}
